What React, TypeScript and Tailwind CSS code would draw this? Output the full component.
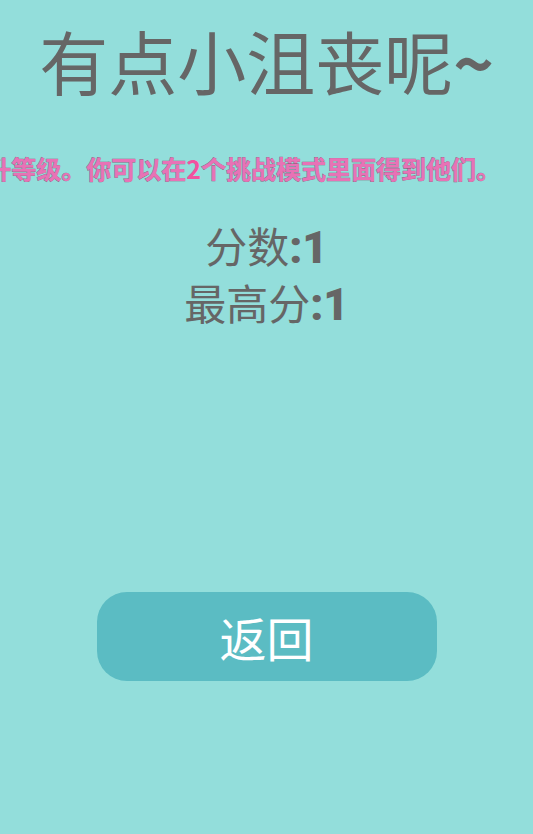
import React from 'react';

const cjk = "font-['Noto_Sans_CJK_SC','Noto_Sans',sans-serif]";

export default function App() {
	return (
		<div className={`flex flex-col items-center w-full min-h-[834px] bg-[#93dedb] overflow-hidden ${cjk}`}>
			<h1 className="mt-[22px] text-[69px] leading-[76px] text-[#666666] whitespace-nowrap">
				有点小沮丧呢<span className="font-bold">~</span>
			</h1>
			<div className="w-full flex justify-end pr-[32px] mt-[55px] overflow-hidden">
				<p className="whitespace-nowrap text-[25px] leading-[30px] font-bold text-[#e872b6] [-webkit-text-stroke:0.7px_#8f5f7d] [paint-order:stroke_fill]">
					收集钻石提升等级。你可以在
					<span className="text-[#f2529f] [-webkit-text-stroke:0px]">2</span>
					个挑战模式里面得到他们。
				</p>
			</div>
			<div className="mt-[35px] flex flex-col items-center text-[42px] leading-[54px] text-[#666666]">
				<span>
					分数<b className="font-['Roboto',sans-serif] font-black text-[44px]">:1</b>
				</span>
				<span>
					最高分<b className="font-['Roboto',sans-serif] font-black text-[44px]">:1</b>
				</span>
			</div>
			<button className="mt-[260px] w-[340px] h-[89px] rounded-[30px] bg-[#5bbcc3] text-white text-[47px] leading-none">
				返回
			</button>
		</div>
	);
}
